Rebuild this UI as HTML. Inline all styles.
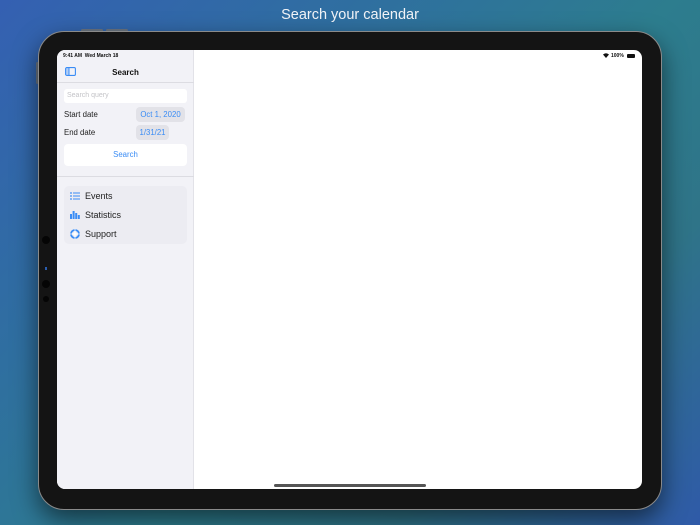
<!DOCTYPE html>
<html><head><style>
*{margin:0;padding:0;box-sizing:border-box}
body{width:700px;height:525px;overflow:hidden;position:relative;font-family:"Liberation Sans",sans-serif;
background:linear-gradient(135deg,#3460b2 0%,#2f6fa0 30%,#2d7d8e 55%,#2f7488 75%,#2f5aa8 100%);}
.title{position:absolute;top:7px;left:0;width:700px;text-align:center;color:#f2f4f8;font-size:14.5px;}
.dev{position:absolute;left:38px;top:31px;width:624px;height:479px;background:#141414;border-radius:26px;border:1.5px solid #8a8a8a;box-shadow:0 10px 25px rgba(0,0,0,.55);}
.btn{position:absolute;background:#6a7480;border-radius:2px}
.screen{position:absolute;left:57px;top:50px;width:585px;height:439px;background:#fff;border-radius:8px;overflow:hidden;}
.side{position:absolute;left:0;top:0;width:137px;height:439px;background:#f2f2f7;border-right:1px solid #e2e2e8}
.st{position:absolute;top:3px;font-size:5px;color:#111;font-weight:bold}
.nav{position:absolute;top:18px;left:0;width:137px;text-align:center;font-size:8px;font-weight:bold;color:#111}
.hr{position:absolute;left:0;width:137px;height:1px;background:#dcdce2}
.inp{position:absolute;left:7px;top:39px;width:123px;height:14px;background:#fff;border-radius:3px;font-size:7px;color:#c4c4c8;padding:3px 3px}
.lbl{position:absolute;left:7px;font-size:7.8px;color:#222}
.pill{position:absolute;background:#e2e2e8;border-radius:4px;color:#3a8cf5;font-size:7.8px;text-align:center;padding-top:3px;height:15px}
.sbtn{position:absolute;left:7px;top:94px;width:123px;height:22px;background:#fff;border-radius:4px;color:#3a8cf5;font-size:7.8px;text-align:center;line-height:22px}
.menu{position:absolute;left:7px;top:136px;width:123px;height:58px;background:#ececf2;border-radius:5px}
.mi{position:absolute;font-size:9px;color:#222}
.home{position:absolute;left:274px;top:484px;width:152px;height:2.5px;background:#555;border-radius:2px}
</style></head><body>
<div class="title">Search your calendar</div>
<div class="btn" style="left:81px;top:29px;width:22px;height:3px"></div>
<div class="btn" style="left:106px;top:29px;width:22px;height:3px"></div>
<div class="btn" style="left:36px;top:62px;width:3px;height:22px"></div>
<div class="dev"></div>
<div style="position:absolute;left:42px;top:236px;width:8px;height:8px;border-radius:50%;background:#050505"></div>
<div style="position:absolute;left:45px;top:267px;width:2px;height:3px;background:#2a5db0"></div>
<div style="position:absolute;left:42px;top:280px;width:8px;height:8px;border-radius:50%;background:#050505"></div>
<div style="position:absolute;left:43px;top:296px;width:6px;height:6px;border-radius:50%;background:#050505"></div>
<div class="screen">
 <div class="side">
  <div class="st" style="left:6px">9:41 AM&nbsp; Wed March 18</div>
  <svg style="position:absolute;left:8px;top:17px" width="11" height="9"><rect x=".6" y=".6" width="9.8" height="7.8" rx="1.2" fill="none" stroke="#3a8cf5" stroke-width="1.1"/><line x1="4" y1="1" x2="4" y2="8" stroke="#3a8cf5"/><rect x="1" y="1" width="3" height="7" fill="#3a8cf5" opacity=".35"/></svg>
  <div class="nav">Search</div>
  <div class="hr" style="top:32px"></div>
  <div class="inp">Search query</div>
  <div class="lbl" style="top:60px">Start date</div>
  <div class="pill" style="left:79px;top:57px;width:49px">Oct 1, 2020</div>
  <div class="lbl" style="top:78px">End date</div>
  <div class="pill" style="left:79px;top:75px;width:33px">1/31/21</div>
  <div class="sbtn">Search</div>
  <div class="hr" style="top:126px"></div>
  <div class="menu">
   <svg style="position:absolute;left:6px;top:6px" width="10" height="8"><g fill="#3a8cf5"><circle cx="1" cy="1" r=".9"/><circle cx="1" cy="4" r=".9"/><circle cx="1" cy="7" r=".9"/><rect x="3" y=".5" width="7" height="1"/><rect x="3" y="3.5" width="7" height="1"/><rect x="3" y="6.5" width="7" height="1"/></g></svg>
   <div class="mi" style="top:5px;left:21px">Events</div>
   <svg style="position:absolute;left:6px;top:25px" width="10" height="8"><g fill="#3a8cf5"><rect x="0" y="3" width="2" height="5"/><rect x="2.6" y="0" width="2" height="8"/><rect x="5.2" y="2" width="2" height="6"/><rect x="7.8" y="4" width="2" height="4"/></g></svg>
   <div class="mi" style="top:24px;left:21px">Statistics</div>
   <svg style="position:absolute;left:6px;top:43px" width="10" height="10"><circle cx="5" cy="5" r="4" fill="none" stroke="#3a8cf5" stroke-width="1.8"/><circle cx="5" cy="5" r="1.6" fill="#fff"/><path d="M5 0v10M0 5h10" stroke="#fff" stroke-width=".8"/></svg>
   <div class="mi" style="top:43px;left:21px">Support</div>
  </div>
 </div>
 <svg style="position:absolute;left:546px;top:3px" width="6" height="5"><path d="M0 1.5Q3 -1 6 1.5L3 5Z" fill="#111"/></svg>
 <div class="st" style="left:554px">100%</div>
 <div style="position:absolute;left:570px;top:4px;width:8px;height:4px;background:#111;border-radius:1px"></div>
</div>
<div class="home"></div>
</body></html>
